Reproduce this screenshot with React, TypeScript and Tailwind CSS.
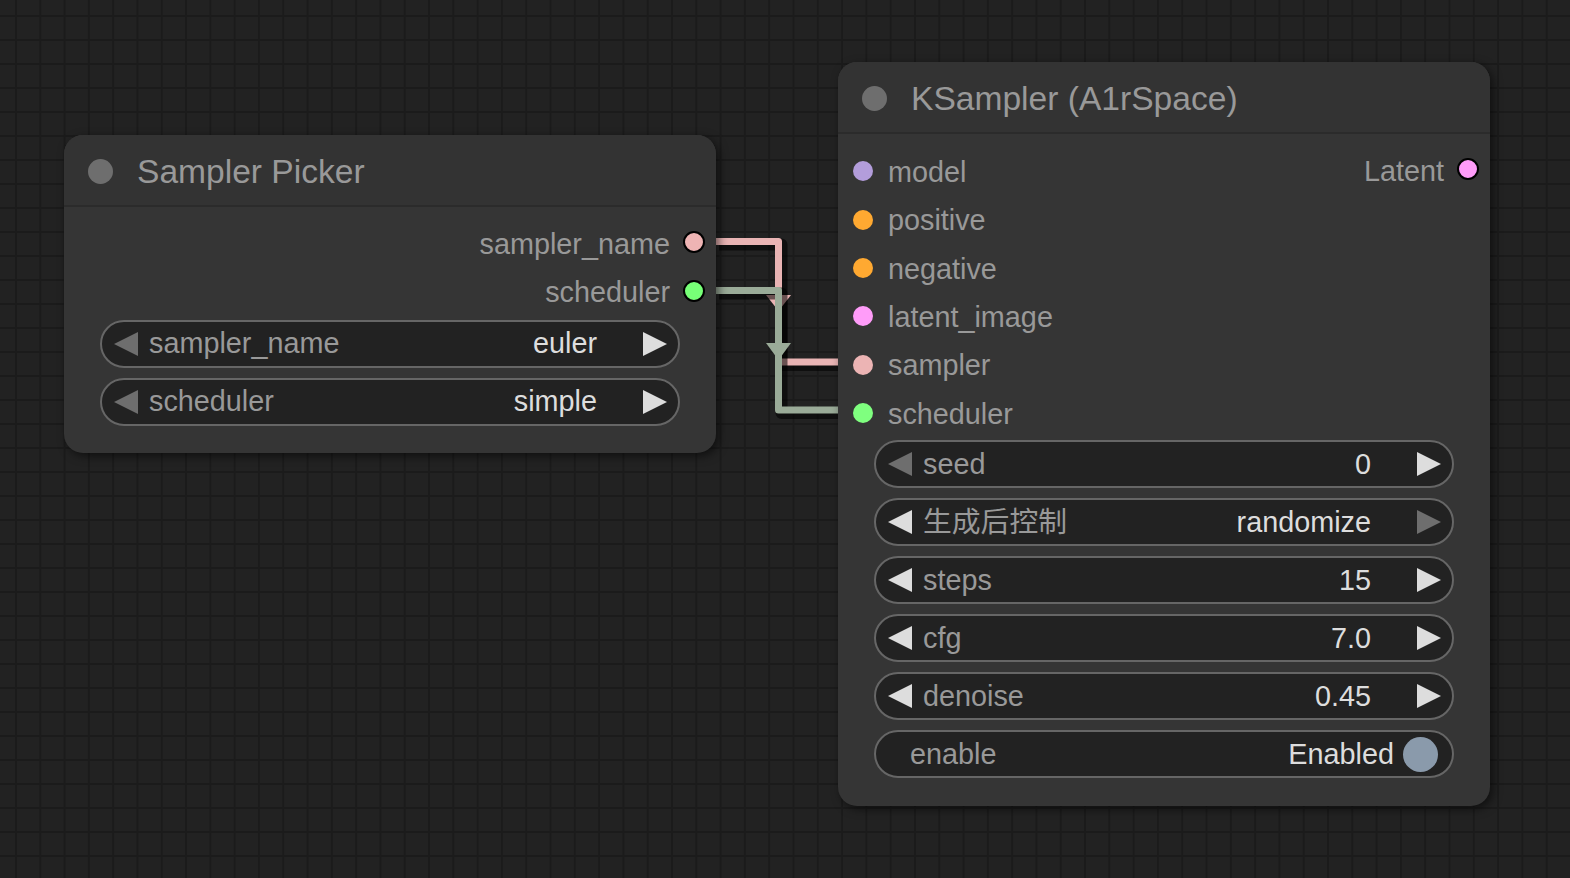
import React from "react";

const FONT = "font-['Liberation_Sans',Arial,'Noto_Sans_CJK_SC',sans-serif]";

function Tri({ dir, dim }: { dir: "l" | "r"; dim?: boolean }) {
  const pts = dir === "l" ? "24,0 24,24 0,12" : "0,0 0,24 24,12";
  return (
    <svg width="24" height="24" viewBox="0 0 24 24" className="shrink-0">
      <polygon points={pts} fill={dim ? "#6e6e6e" : "#dddddd"} />
    </svg>
  );
}

function ComboWidget({
  label,
  value,
  dimLeft,
  dimRight,
}: {
  label: string;
  value: string;
  dimLeft?: boolean;
  dimRight?: boolean;
}) {
  return (
    <div className="h-[48px] rounded-full border-2 border-[#666666] bg-[#222222] flex items-center pl-[12px] pr-[11px]">
      <Tri dir="l" dim={dimLeft} />
      <span className="ml-[11px] text-[#999999] text-[28.8px] leading-none">{label}</span>
      <div className="flex-1" />
      <span className="text-[#dddddd] text-[28.8px] leading-none">{value}</span>
      <div className="w-[46px]" />
      <Tri dir="r" dim={dimRight} />
    </div>
  );
}

function ToggleWidget() {
  return (
    <div className="h-[48px] rounded-full border-2 border-[#666666] bg-[#222222] flex items-center pl-[34px] pr-[14px]">
      <span className="text-[#999999] text-[28.8px] leading-none">enable</span>
      <div className="flex-1" />
      <span className="text-[#dddddd] text-[28.8px] leading-none">Enabled</span>
      <div className="ml-[9px] w-[35px] h-[35px] rounded-full bg-[#8a9aab]" />
    </div>
  );
}

function Title({ text }: { text: string }) {
  return (
    <div className="h-[72px] flex items-center pl-[24px] bg-[#333333] rounded-t-[19px] border-b-2 border-[#2b2b2b]">
      <div className="w-[25px] h-[25px] rounded-full bg-[#6e6e6e] translate-y-[1px]" />
      <span className="ml-[24px] text-[#999999] text-[33.6px] leading-none translate-y-[2px]">{text}</span>
    </div>
  );
}

function InputSlot({ label, color }: { label: string; color: string }) {
  return (
    <div className="h-[48.4px] flex items-center pl-[15px]">
      <div className={`w-[20px] h-[20px] rounded-full ${color}`} />
      <span className="ml-[15px] text-[#999999] text-[28.8px] leading-none translate-y-[1px]">{label}</span>
    </div>
  );
}

function OutputSlot({ label, color }: { label: string; color: string }) {
  return (
    <div className="h-[48.4px] flex items-center justify-end pr-[11px]">
      <span className="mr-[13px] text-[#999999] text-[28.8px] leading-none translate-y-[2px]">{label}</span>
      <div className={`w-[22px] h-[22px] rounded-full border-2 border-black ${color}`} />
    </div>
  );
}

function Links() {
  const pink = "M716 241.5 H778.5 V362 H840";
  const green = "M716 290.5 H778.5 V410 H840";
  return (
    <svg className="absolute left-0 top-0" width="1570" height="878" viewBox="0 0 1570 878">
      <path d={pink} transform="translate(3 3)" fill="none" stroke="rgba(0,0,0,0.55)" strokeWidth="12" strokeLinejoin="round" />
      <path d={pink} fill="none" stroke="#e9b4b4" strokeWidth="7" strokeLinejoin="round" />
      <polygon points="766,295 791,295 778.5,311" fill="#e9b4b4" />
      <path d={green} transform="translate(3 3)" fill="none" stroke="rgba(0,0,0,0.55)" strokeWidth="12" strokeLinejoin="round" />
      <path d={green} fill="none" stroke="#9aab98" strokeWidth="7" strokeLinejoin="round" />
      <polygon points="766,343 791,343 778.5,360" fill="#9aab98" />
    </svg>
  );
}

export default function App() {
  return (
    <div
      className={`relative w-[1570px] h-[878px] overflow-hidden bg-[#222222] bg-[linear-gradient(90deg,#1b1b1b_2px,transparent_2px),linear-gradient(#1b1b1b_2px,transparent_2px)] bg-[size:24.3px_24px] bg-[position:15px_15px] ${FONT}`}
    >
      <Links />

      {/* Sampler Picker node */}
      <div className="absolute left-[64px] top-[135px] w-[652px] h-[318px] rounded-[19px] bg-[#353535] shadow-[3px_3px_10px_rgba(0,0,0,0.55)] flex flex-col">
        <Title text="Sampler Picker" />
        <div className="pt-[11px] flex flex-col">
          <OutputSlot label="sampler_name" color="bg-[#eeb4b4]" />
          <OutputSlot label="scheduler" color="bg-[#77ff77]" />
        </div>
        <div className="px-[36px] pt-[5px] flex flex-col gap-[10px]">
          <ComboWidget label="sampler_name" value="euler" dimLeft />
          <ComboWidget label="scheduler" value="simple" dimLeft />
        </div>
      </div>

      {/* KSampler node */}
      <div className="absolute left-[838px] top-[62px] w-[652px] h-[744px] rounded-[19px] bg-[#353535] shadow-[3px_3px_10px_rgba(0,0,0,0.55)] flex flex-col">
        <Title text="KSampler (A1rSpace)" />
        <div className="relative pt-[13px] flex flex-col">
          <InputSlot label="model" color="bg-[#b39ddb]" />
          <InputSlot label="positive" color="bg-[#ffa931]" />
          <InputSlot label="negative" color="bg-[#ffa931]" />
          <InputSlot label="latent_image" color="bg-[#ff9cf9]" />
          <InputSlot label="sampler" color="bg-[#ecb4b4]" />
          <InputSlot label="scheduler" color="bg-[#7fff7f]" />
          <div className="absolute right-0 top-[11px] w-[300px]">
            <OutputSlot label="Latent" color="bg-[#ff9cf9]" />
          </div>
        </div>
        <div className="px-[36px] pt-[3px] flex flex-col gap-[10px]">
          <ComboWidget label="seed" value="0" dimLeft />
          <ComboWidget label="生成后控制" value="randomize" dimRight />
          <ComboWidget label="steps" value="15" />
          <ComboWidget label="cfg" value="7.0" />
          <ComboWidget label="denoise" value="0.45" />
          <ToggleWidget />
        </div>
      </div>
    </div>
  );
}
